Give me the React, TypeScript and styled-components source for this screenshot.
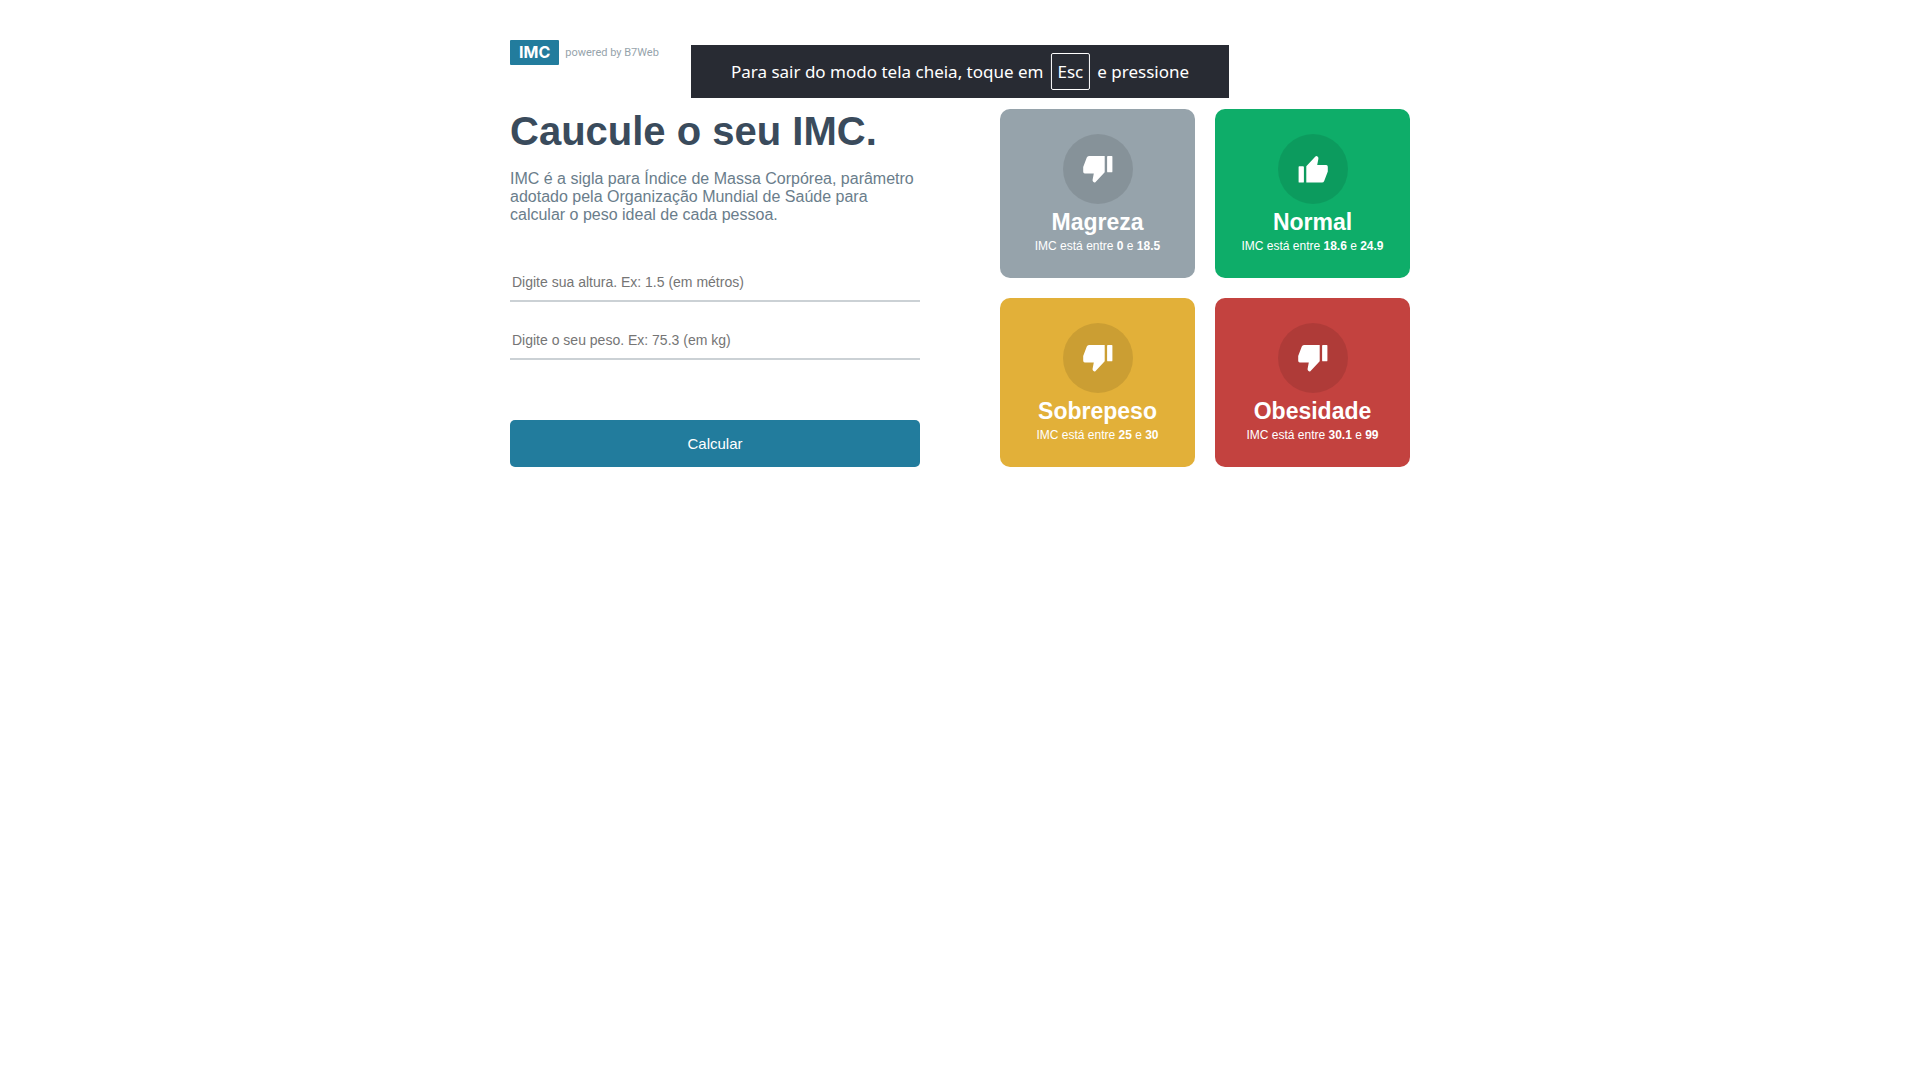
import React, { useState } from "react";
import styled, { createGlobalStyle } from "styled-components";

const GlobalStyle = createGlobalStyle`
  * { margin: 0; padding: 0; box-sizing: border-box; }
  body { background: #fff; font-family: Arial, "Liberation Sans", sans-serif; }
`;

const Container = styled.div`
  max-width: 900px;
  margin: 40px auto;
`;

const Header = styled.header`
  display: flex;
  align-items: center;
  gap: 6px;
  height: 25px;
  margin-bottom: 44px;
`;

const LogoMark = styled.span`
  padding: 0 9px;
  border-radius: 1px;
  background: #227c9d;
  color: #fff;
  font: 700 16px/25px Inter, sans-serif;
`;

const LogoText = styled.span`
  color: #96a3ab;
  font: 400 11px/25px Roboto, sans-serif;
`;

const Main = styled.main`
  display: flex;
  gap: 80px;
`;

const Side = styled.section`
  flex: 1;
`;

const Title = styled.h1`
  margin-bottom: 16px;
  color: #3a4b5c;
  font-size: 40px;
  line-height: 45px;
`;

const Intro = styled.p`
  margin-bottom: 40px;
  color: #6a7d8b;
  font-size: 16px;
  line-height: 18px;
`;

const Form = styled.form`
  display: flex;
  flex-direction: column;
  gap: 20px;
`;

const Field = styled.input`
  width: 100%;
  height: 38px;
  padding: 10px 2px;
  border: 0;
  border-bottom: 2px solid #cbd1d5;
  outline: 0;
  background: transparent;
  color: #3a4b5c;
  font: 14px/16px Arial, "Liberation Sans", sans-serif;
  &::placeholder { color: #757575; }
`;

const Submit = styled.button`
  margin-top: 40px;
  padding: 15px 0;
  border: 0;
  border-radius: 5px;
  background: #227c9d;
  color: #fff;
  font: 15px/17px Arial, "Liberation Sans", sans-serif;
  cursor: pointer;
`;

const Grid = styled.div`
  display: grid;
  grid-template-columns: 1fr 1fr;
  gap: 20px;
`;

const Card = styled.article<{ $color: string }>`
  display: flex;
  flex-direction: column;
  align-items: center;
  gap: 5px;
  padding: 25px 0;
  border-radius: 10px;
  background: ${(p) => p.$color};
  color: #fff;
`;

const IconCircle = styled.div`
  display: flex;
  align-items: center;
  justify-content: center;
  width: 70px;
  height: 70px;
  border-radius: 50%;
  background: rgba(0, 0, 0, 0.1);
`;

const CardTitle = styled.h2`
  font-size: 23px;
  line-height: 26px;
`;

const CardInfo = styled.p`
  font-size: 12px;
  line-height: 13px;
`;

const Notice = styled.div`
  position: fixed;
  top: 45px;
  left: 50%;
  transform: translateX(-50%);
  display: flex;
  align-items: center;
  gap: 7px;
  padding: 8px 40px;
  background: #282b33;
  color: #fff;
  font: 400 17px/35px "Noto Sans", sans-serif;
  white-space: nowrap;
`;

const Key = styled.kbd`
  padding: 0 6px;
  border: 1px solid #fff;
  border-radius: 2px;
  font: inherit;
`;

const Thumb = ({ down }: { down?: boolean }) => (
  <svg width="30" height="28" viewBox="0 0 30 28" fill="#fff" aria-hidden="true">
    <g transform={down ? "rotate(180 15 14.25)" : undefined}>
      <path d="M1.3 11.2H5Q5.9 11.2 5.9 12.1V26.7Q5.9 27.6 5 27.6H1.3Q.6 27.6 .6 26.7V12.1Q.6 11.2 1.3 11.2Z" />
      <path d="M8.3 11.2L17.4 1.6Q18.4 .6 19.5 1.4Q20.7 2.3 20.4 3.8L19.2 10H28.2Q29.8 10 29.8 11.8V16.4L26.2 26Q25.6 27.6 24 27.6H8.3Z" />
    </g>
  </svg>
);

const levels = [
  { title: "Magreza", color: "#96a3ab", from: "0", to: "18.5" },
  { title: "Normal", color: "#0ead69", from: "18.6", to: "24.9", up: true },
  { title: "Sobrepeso", color: "#e2b039", from: "25", to: "30" },
  { title: "Obesidade", color: "#c3423f", from: "30.1", to: "99" },
];

export default function App() {
  const [height, setHeight] = useState("");
  const [weight, setWeight] = useState("");
  return (
    <>
      <GlobalStyle />
      <Container>
        <Header>
          <LogoMark>IMC</LogoMark>
          <LogoText>powered by B7Web</LogoText>
        </Header>
        <Main>
          <Side>
            <Title>Caucule o seu IMC.</Title>
            <Intro>
              IMC é a sigla para Índice de Massa Corpórea, parâmetro adotado pela
              Organização Mundial de Saúde para calcular o peso ideal de cada pessoa.
            </Intro>
            <Form onSubmit={(e) => e.preventDefault()}>
              <Field
                aria-label="Altura"
                placeholder="Digite sua altura. Ex: 1.5 (em métros)"
                value={height}
                onChange={(e) => setHeight(e.target.value)}
              />
              <Field
                aria-label="Peso"
                placeholder="Digite o seu peso. Ex: 75.3 (em kg)"
                value={weight}
                onChange={(e) => setWeight(e.target.value)}
              />
              <Submit type="submit">Calcular</Submit>
            </Form>
          </Side>
          <Side>
            <Grid>
              {levels.map((l) => (
                <Card key={l.title} $color={l.color}>
                  <IconCircle>
                    <Thumb down={!l.up} />
                  </IconCircle>
                  <CardTitle>{l.title}</CardTitle>
                  <CardInfo>
                    IMC está entre <strong>{l.from}</strong> e <strong>{l.to}</strong>
                  </CardInfo>
                </Card>
              ))}
            </Grid>
          </Side>
        </Main>
      </Container>
      <Notice role="status">
        <span>Para sair do modo tela cheia, toque em</span>
        <Key>Esc</Key>
        <span>e pressione</span>
      </Notice>
    </>
  );
}
